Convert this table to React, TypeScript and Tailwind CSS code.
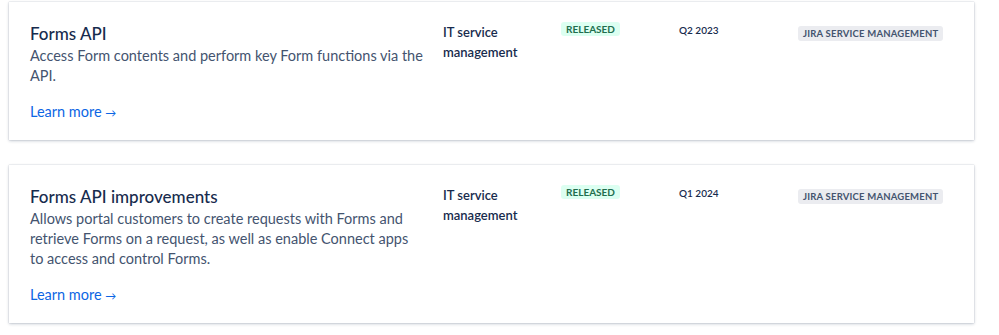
import React from "react";

type Item = {
  title: string;
  description: string;
  category: string;
  status: string;
  release: string;
  product: string;
};

const items: Item[] = [
  {
    title: "Forms API",
    description:
      "Access Form contents and perform key Form functions via the API.",
    category: "IT service management",
    status: "RELEASED",
    release: "Q2 2023",
    product: "JIRA SERVICE MANAGEMENT",
  },
  {
    title: "Forms API improvements",
    description:
      "Allows portal customers to create requests with Forms and retrieve Forms on a request, as well as enable Connect apps to access and control Forms.",
    category: "IT service management",
    status: "RELEASED",
    release: "Q1 2024",
    product: "JIRA SERVICE MANAGEMENT",
  },
];

const RoadmapCard = ({ item }: { item: Item }) => (
  <div className="bg-white shadow-[0_1px_3px_rgba(9,30,66,0.22),0_0_1px_rgba(9,30,66,0.28)] pt-5 pb-[17px] pl-[21px] pr-[21px] grid grid-cols-[413px_118px_118px_119px_1fr]">
    {/* Title + description */}
    <div>
      <h3 className="text-[17px] leading-6 font-medium text-[#172b4d]">
        {item.title}
      </h3>
      <p className="w-[393.5px] text-[14.5px] leading-5 text-[#44546f]">
        {item.description}
      </p>
      <a href="#" className="mt-4 block text-[14.5px] leading-5 text-[#0c66e4]">
        Learn more <span className="text-[11px]">→</span>
      </a>
    </div>

    {/* Category */}
    <div className="text-[13px] leading-5 font-semibold text-[#172b4d] pr-4">
      {item.category}
    </div>

    {/* Status */}
    <div className="flex items-start">
      <span className="rounded-[3px] bg-[#dcfff1] px-[5px] py-[1px] text-[10px] leading-[12px] font-bold text-[#216e4e]">
        {item.status}
      </span>
    </div>

    {/* Release */}
    <div className="text-[10px] leading-[14px] font-semibold text-[#172b4d] pt-[1px]">
      {item.release}
    </div>

    {/* Product */}
    <div className="flex items-start pt-1">
      <span className="whitespace-nowrap rounded-[3px] bg-[#ebecf0] px-[5px] py-[1px] text-[9.5px] leading-[13px] font-bold tracking-[0.2px] text-[#44546f]">
        {item.product}
      </span>
    </div>
  </div>
);

export default function App() {
  return (
    <div
      className="w-[999px] h-[335px] bg-white pt-[2px] pl-[9px] pr-[25px] flex flex-col gap-[25px]"
      style={{ fontFamily: "Lato, 'Noto Sans', sans-serif" }}
    >
      {items.map((item) => (
        <RoadmapCard key={item.title} item={item} />
      ))}
    </div>
  );
}
